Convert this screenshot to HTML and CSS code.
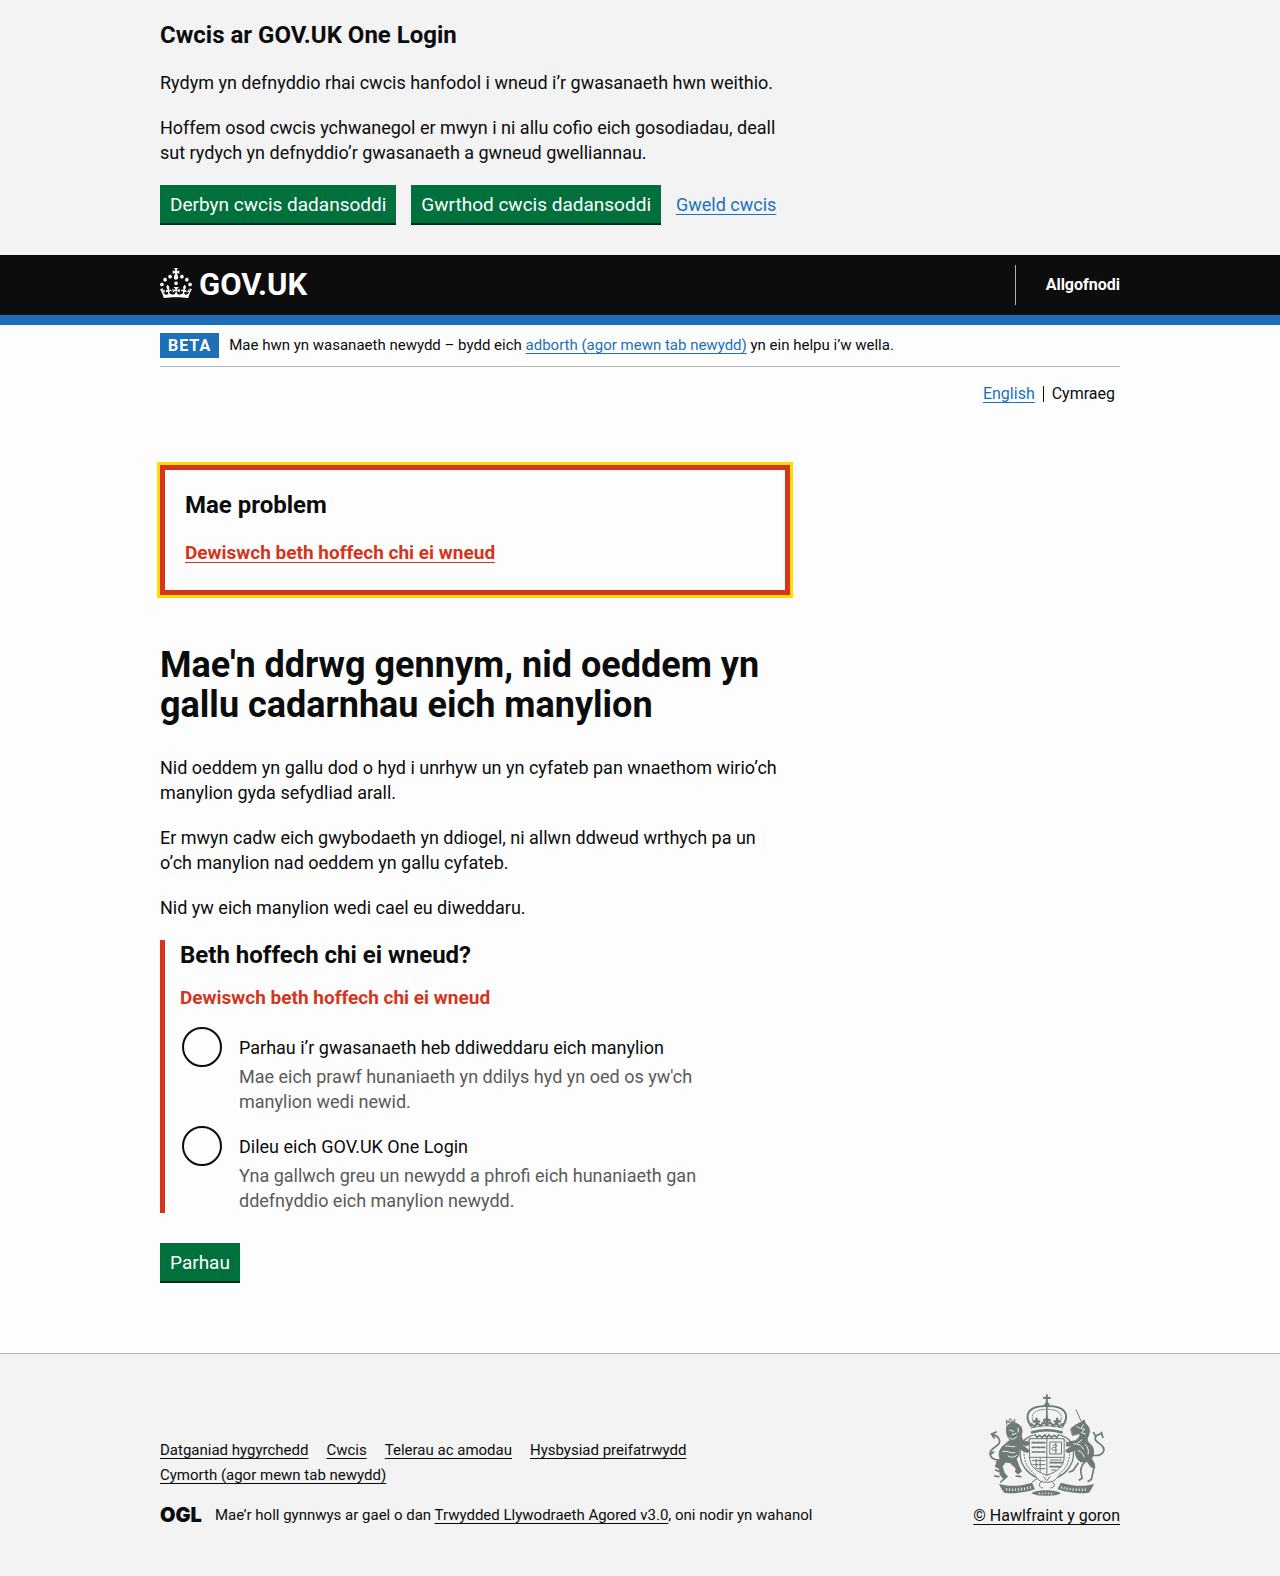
FILE: index.html
```html
<!DOCTYPE html>
<html lang="cy">
<head>
<meta charset="utf-8">
<meta name="viewport" content="width=device-width, initial-scale=1">
<title>Mae'n ddrwg gennym, nid oeddem yn gallu cadarnhau eich manylion</title>
<link rel="stylesheet" href="styles.css">
</head>
<body>
<section class="cookie-banner" aria-label="Cwcis ar GOV.UK One Login">
  <div class="container">
    <div class="two-thirds">
      <h2 class="heading-m">Cwcis ar GOV.UK One Login</h2>
      <p class="body-text">Rydym yn defnyddio rhai cwcis hanfodol i wneud i’r gwasanaeth hwn weithio.</p>
      <p class="body-text">Hoffem osod cwcis ychwanegol er mwyn i ni allu cofio eich gosodiadau, deall sut rydych yn defnyddio’r gwasanaeth a gwneud gwelliannau.</p>
    </div>
    <div class="button-group">
      <button class="button" type="button">Derbyn cwcis dadansoddi</button>
      <button class="button" type="button">Gwrthod cwcis dadansoddi</button>
      <a class="link" href="#cwcis">Gweld cwcis</a>
    </div>
  </div>
</section>

<header class="header">
  <div class="container header-inner">
    <a class="logo" href="#" aria-label="GOV.UK">
      <svg class="crown" viewBox="0 0 32 30" aria-hidden="true"><path fill="currentColor" d="M22.6 10.4c-1 .4-2-.1-2.4-1-.4-.9.1-2 1-2.4.9-.4 2 .1 2.4 1s-.1 2-1 2.4m-5.9 6.7c-.9.4-2-.1-2.4-1-.4-.9.1-2 1-2.4.9-.4 2 .1 2.4 1s-.1 2-1 2.4m10.8-3.7c-1 .4-2-.1-2.4-1-.4-.9.1-2 1-2.4.9-.4 2 .1 2.4 1s0 2-1 2.4m3.3 4.8c-1 .4-2-.1-2.4-1-.4-.9.1-2 1-2.4.9-.4 2 .1 2.4 1s-.1 2-1 2.4M17 4.7l2.3 1.2V2.5l-2.3.7-.2-.2.9-3h-3.4l.9 3-.2.2c-.1.1-2.3-.7-2.3-.7v3.4L15 4.7c.1.1.1.2.2.2l-1.3 4c-.1.2-.1.4-.1.6 0 1.1.8 2 1.9 2.2h.7c1-.2 1.9-1.1 1.9-2.1 0-.2 0-.4-.1-.6l-1.3-4c-.1-.2 0-.2.1-.3m-7.6 5.7c.9.4 2-.1 2.4-1 .4-.9-.1-2-1-2.4-.9-.4-2 .1-2.4 1s0 2 1 2.4m-5 3c.9.4 2-.1 2.4-1 .4-.9-.1-2-1-2.4-.9-.4-2 .1-2.4 1s.1 2 1 2.4m-3.2 4.8c.9.4 2-.1 2.4-1 .4-.9-.1-2-1-2.4-.9-.4-2 .1-2.4 1s0 2 1 2.4m14.8 11c4.4 0 8.6.3 12.3.8 1.1-4.5 2.4-7 3.7-8.8l-2.5-.9c.2 1.3.3 1.9 0 2.7-.4-.4-.8-1.1-1.1-2.3l-1.2 4c.7-.5 1.3-.8 2-.9-1.1 2.5-2.6 3.1-3.5 3-1.1-.2-1.7-1.2-1.5-2.1.3-1.2 1.5-1.5 2.1-.1 1.1-2.3-.8-3-2-2.3 1.9-1.9 2.1-3.5.6-5.6-2.1 1.6-2.1 3.2-1.2 5.5-1.2-1.4-3.2-.6-2.5 1.6.9-1.4 2.1-.5 1.9.8-.2 1.1-1.7 2.1-3.5 1.9-2.7-.2-2.9-2.1-2.9-3.6.7-.1 1.9.5 2.9 1.9l.4-4.3c-1.1 1.1-2.1 1.4-3.2 1.4.4-1.2 2.1-3 2.1-3h-5.4s1.7 1.9 2.1 3c-1.1 0-2.1-.2-3.2-1.4l.4 4.3c1-1.4 2.2-2 2.9-1.9-.1 1.5-.2 3.4-2.9 3.6-1.9.2-3.4-.8-3.5-1.9-.2-1.3 1-2.2 1.9-.8.7-2.3-1.2-3-2.5-1.6.9-2.2.9-3.9-1.2-5.5-1.5 2-1.3 3.7.6 5.6-1.2-.7-3.1 0-2 2.3.6-1.4 1.8-1.1 2.1.1.2.9-.3 1.9-1.5 2.1-.9.2-2.4-.5-3.5-3 .6 0 1.2.3 2 .9l-1.2-4c-.3 1.1-.7 1.9-1.1 2.3-.3-.8-.2-1.4 0-2.7l-2.9.9C1.3 23 2.6 25.5 3.7 30c3.7-.5 7.9-.8 12.3-.8"/></svg>
      <span class="logo-text">GOV.UK</span>
    </a>
    <nav class="header-nav" aria-label="Cyfrif"><a href="#allgofnodi">Allgofnodi</a></nav>
  </div>
</header>

<div class="page">
  <div class="container">
    <div class="phase-banner">
      <strong class="tag">BETA</strong>
      <span>Mae hwn yn wasanaeth newydd – bydd eich <a class="link" href="#adborth">adborth (agor mewn tab newydd)</a> yn ein helpu i’w wella.</span>
    </div>
    <nav class="language" aria-label="Dewis iaith">
      <ul class="language-list">
        <li><a class="link" href="#en" lang="en">English</a></li>
        <li class="language-current" aria-current="true">Cymraeg</li>
      </ul>
    </nav>

    <main class="main two-thirds">
      <div class="error-summary" role="alert">
        <h2 class="heading-m">Mae problem</h2>
        <ul class="error-list">
          <li><a href="#parhau">Dewiswch beth hoffech chi ei wneud</a></li>
        </ul>
      </div>

      <h1 class="heading-l">Mae'n ddrwg gennym, nid oeddem yn gallu cadarnhau eich manylion</h1>
      <p class="body-text">Nid oeddem yn gallu dod o hyd i unrhyw un yn cyfateb pan wnaethom wirio’ch manylion gyda sefydliad arall.</p>
      <p class="body-text">Er mwyn cadw eich gwybodaeth yn ddiogel, ni allwn ddweud wrthych pa un o’ch manylion nad oeddem yn gallu cyfateb.</p>
      <p class="body-text">Nid yw eich manylion wedi cael eu diweddaru.</p>

      <form action="#">
        <div class="form-group">
          <fieldset aria-describedby="error">
            <legend class="heading-m legend">Beth hoffech chi ei wneud?</legend>
            <p class="error-message" id="error">Dewiswch beth hoffech chi ei wneud</p>
            <div class="radio">
              <input class="radio-input" type="radio" name="dewis" id="parhau" aria-describedby="parhau-hint">
              <div class="radio-text">
                <label class="radio-label" for="parhau">Parhau i’r gwasanaeth heb ddiweddaru eich manylion</label>
                <p class="hint" id="parhau-hint">Mae eich prawf hunaniaeth yn ddilys hyd yn oed os yw'ch manylion wedi newid.</p>
              </div>
            </div>
            <div class="radio">
              <input class="radio-input" type="radio" name="dewis" id="dileu" aria-describedby="dileu-hint">
              <div class="radio-text">
                <label class="radio-label" for="dileu">Dileu eich GOV.UK One Login</label>
                <p class="hint" id="dileu-hint">Yna gallwch greu un newydd a phrofi eich hunaniaeth gan ddefnyddio eich manylion newydd.</p>
              </div>
            </div>
          </fieldset>
        </div>
        <button class="button" type="submit">Parhau</button>
      </form>
    </main>
  </div>
</div>

<footer class="footer">
  <div class="container footer-inner">
    <div class="footer-meta">
      <ul class="footer-links">
        <li><a href="#hygyrchedd">Datganiad hygyrchedd</a></li>
        <li><a href="#cwcis">Cwcis</a></li>
        <li><a href="#telerau">Telerau ac amodau</a></li>
        <li><a href="#preifatrwydd">Hysbysiad preifatrwydd</a></li>
        <li><a href="#cymorth">Cymorth (agor mewn tab newydd)</a></li>
      </ul>
      <div class="licence">
        <span class="ogl" aria-hidden="true">OGL</span>
        <span>Mae’r holl gynnwys ar gael o dan <a href="#trwydded">Trwydded Llywodraeth Agored v3.0</a>, oni nodir yn wahanol</span>
      </div>
    </div>
    <a class="copyright" href="#hawlfraint">
      <svg class="crest" viewBox="60 38 350 306" aria-hidden="true">
        <g fill="none" stroke="#6d7a77" stroke-width="5" stroke-linejoin="round" stroke-linecap="round">
          <!-- Crown -->
          <path stroke-width="6" d="M236 42v24M227 50h18"/>
          <circle cx="236" cy="70" r="5" fill="#6d7a77"/>
          <path stroke-width="6" d="M188 134c-22-34-8-60 46-60h4c54 0 68 26 46 60"/>
          <path stroke-width="3" stroke-dasharray="3 4" d="M197 124c-12-24 0-38 34-40M275 124c12-24 0-38-34-40"/>
          <path d="M236 78v36"/>
          <path stroke-width="8" d="M192 153c28-8 60-8 88 0"/>
          <path stroke-width="3" d="M188 140c32-9 64-9 96 0"/>
          <path stroke-width="6" d="M190 128l8 8 10-11 9 9 10-12 9 10 9-10 10 12 9-9 10 11 8-8"/>
          <path stroke-width="7" d="M205 112v16M197 120h16M236 108v16M228 116h16M267 112v16M259 120h16"/>
          <!-- Garter and shield -->
          <path stroke-width="4" d="M194 162c-28 8-40 30-38 58 1 30 22 56 48 68M278 162c28 8 40 30 38 58-1 30-22 56-48 68"/>
          <path stroke-width="3" stroke-dasharray="4 5" d="M188 172c-16 10-22 28-20 50 2 24 14 44 34 58M284 172c16 10 22 28 20 50-2 24-14 44-34 58"/>
          <path stroke-width="3" d="M184 172h104v54c0 28-18 44-52 56-34-12-52-28-52-56zM236 172v110M185 228h102"/>
          <path stroke-width="5" stroke-dasharray="10 4" d="M192 184h38M192 198h38M192 212h38M246 244h36M246 256h30"/>
          <path stroke-width="3" d="M246 182h34v36h-34zM263 184v32M254 192c14-8 16 6 4 6s-8 12 8 8M192 238h38M194 250h36M206 262h24M204 234v26M216 232v38M246 236h34M250 266h12"/>
          <path stroke-width="5" d="M200 160l6 8 8-6 8 6 8-7 6 7 6-7 8 7 8-6 8 6 6-8"/>
          <path stroke-width="3" d="M192 280c12 4 16 16 26 20s26 4 36 0 14-16 26-20M206 292l-14 10M222 300c-12 6-12 18 2 20M250 300c12 6 12 18-2 20M226 286l10 12 10-12"/>
          <!-- Lion -->
          <path fill="#6d7a77" stroke-width="3" d="M116 136c6-10 20-14 32-8 12 5 16 18 12 30-2 10 2 14 6 20l18 6-4 8-20-2 24 18-6 6-26-12c2 14 0 24-8 30l8 22 8 16-10 8-8-6 2-10-18-18-14-2-10 14 6 18 10 12-10 8-12-14-2-18-12-6 4-16 10-8c-8-14 0-34 16-44l14-12c-8-8-14-22-10-40z"/>
          <path stroke="#f3f3f3" stroke-width="3" d="M124 146l12 4M132 160l12-4M124 170c8 6 16 4 22-4M112 194c10-2 18 4 28 2M104 210c14-4 22 8 36 4M120 224c10 6 18 4 26-2M150 140v12"/>
          <path stroke-width="3" d="M116 130l-2-14 7 6 5-11 6 11 8-8-1 15M116 123h24"/>
          <path stroke-width="5" d="M92 236c-24 0-34-20-18-34 12-9 26-16 18-30-4-10-14-10-22-14M70 158l14-6M70 158l8 12M76 212l-10 8M92 270l-10-4M92 286l-12-2M106 294l-8 8M144 284l14 2"/>
          <!-- Unicorn -->
          <path fill="#6d7a77" stroke-width="3" d="M308 142c10-8 18-14 28-18l12-8 4 12c14 8 14 24 8 36-4 10-4 14 4 22 16 14 14 32 6 46l8 14 2 14-12-4-12-16-18 2c-12-8-18-22-16-36l-22 8-8-6 22-16-20 2 2-10 26-6c10-6 14-14 14-22l-22 6z"/>
          <path stroke="#f3f3f3" stroke-width="3" d="M326 136l8 4M346 130l-8 12 12 2-10 10 12 4M340 176l-12 10M316 188c14-2 24 4 30 16M330 208c8 2 14 8 18 18M352 190c8 8 10 18 8 28"/>
          <path stroke-width="3" d="M338 118l-14-32"/>
          <path stroke-width="5" d="M374 222c32 4 42-18 24-32-12-9-22-14-14-26 6-8 14-2 16-10M382 164l-6-10M400 154l4 14M352 240c-14 12-18 28-10 48M374 246c8 14-2 28-4 48M330 246l-16 22-10 4M342 290l-8 6M370 294l-10 6"/>
        </g>
        <!-- Motto ribbon -->
        <g fill="#6d7a77">
          <path d="M92 308l18 4c28 4 54 0 82-8l8 20c-30 10-58 14-92 10l-6-8z"/>
          <path d="M378 308l-18 4c-28 4-54 0-82-8l-10 20c30 10 60 14 94 10l6-8z"/>
          <path d="M190 336c10-12 76-12 88 0-10 10-76 10-88 0z"/>
        </g>
        <g fill="none" stroke="#f3f3f3" stroke-width="8" stroke-dasharray="3 6">
          <path d="M114 324c24 3 50 1 74-6M278 318c24 7 54 9 80 6"/>
          <path stroke-width="5" d="M212 336h46"/>
        </g>
      </svg>
      <span class="copyright-text">© Hawlfraint y goron</span>
    </a>
  </div>
</footer>
</body>
</html>
```

FILE: styles.css
```css
* {
  box-sizing: border-box;
}

body {
  margin: 0;
  background: #f3f3f3;
  color: #0b0c0c;
  font-family: Roboto, "Liberation Sans", sans-serif;
  font-size: 18px;
  line-height: 25px;
}

h1, h2, p, ul, fieldset, legend {
  margin: 0;
  padding: 0;
  border: 0;
}

ul {
  list-style: none;
}

a {
  color: inherit;
  text-decoration-thickness: 1px;
  text-underline-offset: 3px;
  text-decoration-skip-ink: none;
}

.container {
  max-width: 1020px;
  margin: 0 auto;
  padding: 0 30px;
}

.two-thirds {
  max-width: 630px;
}

.link {
  color: #1d70b8;
}

.heading-m {
  margin-bottom: 20px;
  font-size: 24px;
  line-height: 30px;
  font-weight: 700;
}

.heading-l {
  margin-bottom: 30px;
  font-size: 36px;
  line-height: 40px;
  font-weight: 700;
}

.body-text {
  margin-bottom: 20px;
}

.button {
  height: 38px;
  padding: 0 10px;
  border: 0;
  border-radius: 0;
  background: #00703c;
  box-shadow: 0 2px 0 #002d18;
  color: #fff;
  font: inherit;
  font-size: 19px;
}

/* Cookie banner */
.cookie-banner {
  padding: 20px 0 32px;
}

.button-group {
  display: flex;
  flex-wrap: wrap;
  align-items: center;
  gap: 15px;
}

/* Header */
.header {
  background: #0d0d0d;
  border-bottom: 10px solid #1d70b8;
  color: #fff;
}

.header-inner {
  display: flex;
  align-items: center;
  justify-content: space-between;
  min-height: 60px;
}

.header a {
  text-decoration: none;
}

.logo {
  display: flex;
  align-items: center;
  gap: 7px;
}

.crown {
  width: 32px;
  height: 30px;
  margin-bottom: 5px;
}

.logo-text {
  font-size: 31px;
  line-height: 30px;
  font-weight: 700;
}

.header-nav {
  padding: 10px 0 10px 30px;
  border-left: 1px solid #b1b4b6;
  font-size: 16px;
  line-height: 20px;
  font-weight: 700;
}

/* Phase banner and language switch */
.page {
  background: #fdfdfd;
}

.phase-banner {
  display: flex;
  align-items: center;
  gap: 10px;
  padding: 8px 0;
  border-bottom: 1px solid #b1b4b6;
  font-size: 15px;
}

.tag {
  padding: 0 8px;
  background: #1d70b8;
  color: #fff;
  font-size: 16px;
  letter-spacing: 1px;
}

.language {
  padding: 17px 5px 0 0;
  font-size: 16px;
  line-height: 20px;
}

.language-list {
  display: flex;
  justify-content: flex-end;
  align-items: center;
  gap: 8px;
}

.language-current {
  padding-left: 8px;
  border-left: 1px solid #0b0c0c;
  line-height: 16px;
}

.main {
  padding: 61px 0 72px;
}

/* Error summary */
.error-summary {
  margin-bottom: 50px;
  padding: 20px;
  border: 5px solid #d4351c;
  outline: 3px solid #ffdd00;
}

.error-list {
  padding-bottom: 5px;
}

.error-list a,
.error-message {
  color: #d4351c;
  font-size: 19px;
  font-weight: 700;
}

/* Radios */
.form-group {
  margin-bottom: 30px;
  padding-left: 15px;
  border-left: 5px solid #d4351c;
}

.legend {
  margin-bottom: 15px;
}

.error-message {
  margin-bottom: 15px;
}

.radio {
  display: flex;
  gap: 17px;
}

.radio + .radio {
  margin-top: 10px;
}

.radio-input {
  appearance: none;
  flex: none;
  width: 40px;
  height: 40px;
  margin: 2px 0 2px 2px;
  border: 2px solid #0b0c0c;
  border-radius: 50%;
  background: #fdfdfd;
}

.radio-input:checked {
  background: radial-gradient(#0b0c0c 10px, #fdfdfd 11px);
}

.radio-text {
  max-width: 480px;
}

.radio-label {
  display: block;
  padding: 10px 0 4px;
}

.hint {
  color: #595959;
}

/* Footer */
.footer {
  padding: 40px 0;
  border-top: 1px solid #b1b4b6;
  font-size: 15px;
}

.footer-inner {
  display: flex;
  flex-wrap: wrap;
  align-items: flex-end;
  justify-content: space-between;
  gap: 15px;
}

.footer-meta {
  max-width: 700px;
}

.footer-links {
  display: flex;
  flex-wrap: wrap;
  column-gap: 18px;
  margin-bottom: 15px;
}

.licence {
  display: flex;
  align-items: center;
  gap: 13px;
}

.ogl {
  font-family: Inter, sans-serif;
  font-size: 20px;
  font-weight: 900;
}

.copyright {
  display: flex;
  flex-direction: column;
  align-items: center;
  gap: 7px;
  font-size: 16px;
  text-decoration-line: none;
}

.copyright-text {
  text-decoration: underline 1px;
  text-underline-offset: 3px;
}

.crest {
  width: 117px;
  height: 102px;
}
```
